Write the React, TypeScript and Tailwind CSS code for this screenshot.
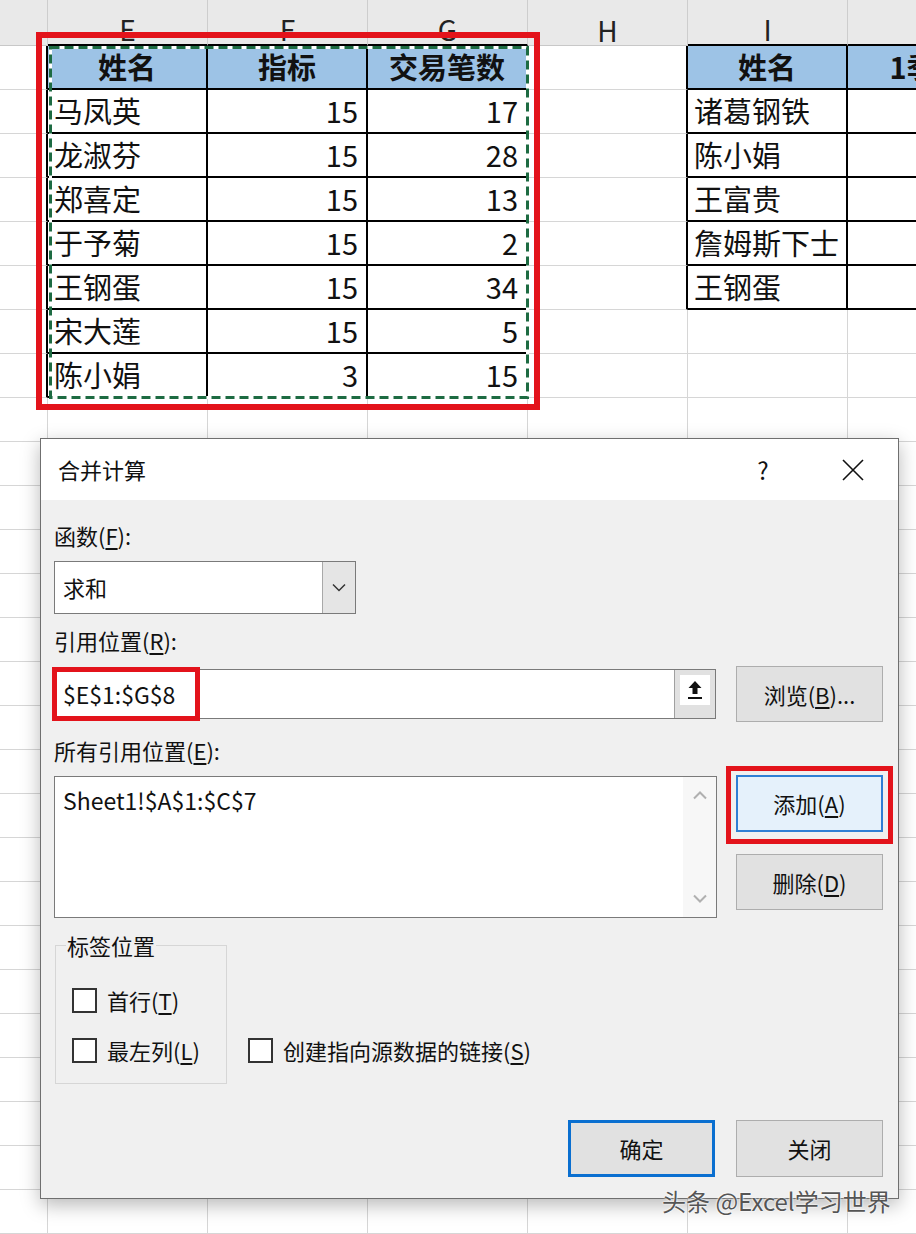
import type { FC, ReactNode } from 'react';

const colWidths = ['w-[48px]', 'w-[160px]', 'w-[160px]', 'w-[160px]', 'w-[160px]', 'w-[160px]', 'w-[160px]'];
const colLetters = ['', 'E', 'F', 'G', 'H', 'I', ''];

const tableA: (string | number)[][] = [
  ['姓名', '指标', '交易笔数'],
  ['马凤英', 15, 17],
  ['龙淑芬', 15, 28],
  ['郑喜定', 15, 13],
  ['于予菊', 15, 2],
  ['王钢蛋', 15, 34],
  ['宋大莲', 15, 5],
  ['陈小娟', 3, 15],
];

const tableB: string[][] = [
  ['姓名', '1季度'],
  ['诸葛钢铁', ''],
  ['陈小娟', ''],
  ['王富贵', ''],
  ['詹姆斯下士', ''],
  ['王钢蛋', ''],
];

const ROWS = 27;

const cellContent = (r: number, c: number): ReactNode => {
  if (r >= 1 && r <= 8 && c >= 1 && c <= 3) {
    const v = tableA[r - 1][c - 1];
    if (r === 1) return <span className="w-full text-center font-bold">{v}</span>;
    if (typeof v === 'number') return <span className="w-full pr-[8px] text-right">{v}</span>;
    return <span className="pl-[6px]">{v}</span>;
  }
  if (r >= 1 && r <= 6 && c >= 5) {
    const v = tableB[r - 1][c - 5];
    if (r === 1) return <span className="w-full text-center font-bold">{v}</span>;
    return <span className="pl-[6px]">{v}</span>;
  }
  return null;
};

const cellClass = (r: number, c: number) => {
  const inA = r <= 8 && c >= 1 && c <= 3;
  const inB = r <= 6 && c >= 5;
  const rightBlack = inA || inB || (c === 0 && r <= 8) || (c === 4 && r <= 6);
  const isHead = (r === 1 && c >= 1 && c <= 3) || (r === 1 && c >= 5);
  return [
    'flex h-[44px] shrink-0 items-center overflow-hidden whitespace-nowrap',
    colWidths[c],
    rightBlack ? 'border-r-2 border-r-black' : 'border-r border-r-[#d6d6d6]',
    inA || inB ? 'border-b-2 border-b-black' : 'border-b border-b-[#d6d6d6]',
    isHead ? 'bg-[#9dc3e6]' : 'bg-white',
  ].join(' ');
};

const Mn: FC<{ children: ReactNode }> = ({ children }) => (
  <span className="underline underline-offset-[3px]">{children}</span>
);

const WinButton: FC<{ children: ReactNode; className?: string }> = ({ children, className }) => (
  <button
    type="button"
    className={`flex h-[56px] w-[147px] items-center justify-center text-[22px] text-[#111] ${className ?? 'border border-[#adadad] bg-[#e1e1e1]'}`}
  >
    {children}
  </button>
);

const CheckBox: FC<{ children: ReactNode }> = ({ children }) => (
  <label className="flex h-[28px] items-center">
    <span className="h-[25px] w-[25px] border-2 border-[#333] bg-white" />
    <span className="ml-[10px] text-[22px] leading-[28px] text-[#111]">{children}</span>
  </label>
);

const Dialog: FC = () => (
  <div className="absolute left-[40px] top-[438px] flex h-[761px] w-[859px] flex-col border border-[#6f6f6f] bg-[#f0f0f0] shadow-[0_6px_18px_rgba(0,0,0,0.28)]">
    <div className="flex h-[61px] items-center bg-white pl-[17px] pr-[21px]">
      <span className="text-[22px] text-[#111]">合并计算</span>
      <div className="ml-auto flex items-center gap-[42px]">
        <span className="w-[48px] text-center text-[24px] text-[#111]">?</span>
        <span className="flex w-[48px] justify-center">
          <svg width="22" height="22" viewBox="0 0 22 22">
            <path d="M1 1 L21 21 M21 1 L1 21" stroke="#111" strokeWidth="1.6" fill="none" />
          </svg>
        </span>
      </div>
    </div>

    <div className="flex flex-1 flex-col pl-[13px] pr-[15px] pt-[21px] text-[22px] text-[#111]">
      <div className="h-[28px] leading-[28px]">
        函数(<Mn>F</Mn>):
      </div>
      <div className="mt-[12px] flex h-[53px] w-[302px] border border-[#7a7a7a] bg-white">
        <span className="flex flex-1 items-center pl-[8px]">求和</span>
        <span className="flex w-[33px] items-center justify-center border-l border-[#a8a8a8] bg-[#e5e5e5]">
          <svg width="14" height="9" viewBox="0 0 14 9">
            <path d="M1 1.5 L7 7.5 L13 1.5" stroke="#333" strokeWidth="1.5" fill="none" />
          </svg>
        </span>
      </div>

      <div className="mt-[12px] h-[28px] leading-[28px]">
        引用位置(<Mn>R</Mn>):
      </div>
      <div className="mt-[12px] flex h-[56px] items-center">
        <div className="relative flex h-[50px] w-[662px] border border-[#7a7a7a] bg-white">
          <span className="flex flex-1 items-center pl-[8px] text-[23px]">$E$1:$G$8</span>
          <span className="flex w-[41px] items-start justify-center border-l border-[#a0a0a0] bg-[#e1e1e1] pt-[5px]">
            <span className="flex h-[30px] w-[30px] items-center justify-center bg-white">
              <svg width="18" height="22" viewBox="0 0 18 22">
                <path d="M9 2 L2.5 9 H6.5 V15 H11.5 V9 H15.5 Z" fill="#111" />
                <rect x="2" y="18" width="14" height="2" fill="#111" />
              </svg>
            </span>
          </span>
          <div className="absolute -left-[3px] -top-[3px] h-[54px] w-[148px] border-[5px] border-[#e3131b]" />
        </div>
        <WinButton className="ml-[20px] border border-[#adadad] bg-[#e1e1e1]">
          浏览(<Mn>B</Mn>)...
        </WinButton>
      </div>

      <div className="mt-[14px] h-[28px] leading-[28px]">
        所有引用位置(<Mn>E</Mn>):
      </div>
      <div className="mt-[11px] flex items-start">
        <div className="mt-[1px] flex h-[142px] w-[663px] border border-[#7a7a7a] bg-white">
          <span className="flex-1 pl-[8px] pt-[8px] text-[23px] leading-[30px]">Sheet1!$A$1:$C$7</span>
          <span className="flex w-[33px] flex-col items-center justify-between bg-[#f7f7f7] py-[14px]">
            <svg width="14" height="9" viewBox="0 0 14 9">
              <path d="M1 7.5 L7 1.5 L13 7.5" stroke="#b0b0b0" strokeWidth="2" fill="none" />
            </svg>
            <svg width="14" height="9" viewBox="0 0 14 9">
              <path d="M1 1.5 L7 7.5 L13 1.5" stroke="#b0b0b0" strokeWidth="2" fill="none" />
            </svg>
          </span>
        </div>
        <div className="ml-[19px] flex flex-col">
          <div className="relative">
            <button
              type="button"
              className="flex h-[57px] w-[147px] items-center justify-center border-2 border-[#2f7fd4] bg-[#e5f1fb] text-[22px] text-[#111]"
            >
              添加(<Mn>A</Mn>)
            </button>
            <div className="absolute -left-[10px] -top-[9px] h-[78px] w-[167px] border-[5px] border-[#e3131b]" />
          </div>
          <WinButton className="mt-[22px] border border-[#adadad] bg-[#e1e1e1]">
            删除(<Mn>D</Mn>)
          </WinButton>
        </div>
      </div>

      <div className="mt-[13px] flex items-end">
        <fieldset className="ml-[1px] h-[153px] w-[172px] border border-[#d6d6d6] px-[16px]">
          <legend className="ml-[-6px] h-[28px] px-[1px] leading-[28px]">标签位置</legend>
          <div className="mt-[27px] flex flex-col gap-[22px]">
            <CheckBox>
              首行(<Mn>T</Mn>)
            </CheckBox>
            <CheckBox>
              最左列(<Mn>L</Mn>)
            </CheckBox>
          </div>
        </fieldset>
        <div className="mb-[20px] ml-[21px]">
          <CheckBox>
            创建指向源数据的链接(<Mn>S</Mn>)
          </CheckBox>
        </div>
      </div>

      <div className="mt-[36px] flex justify-end gap-[21px]">
        <button
          type="button"
          className="flex h-[57px] w-[147px] items-center justify-center border-[3px] border-[#0a6fd0] bg-[#e1e1e1] text-[22px] text-[#111]"
        >
          确定
        </button>
        <button
          type="button"
          className="flex h-[57px] w-[147px] items-center justify-center border border-[#adadad] bg-[#e1e1e1] text-[22px] text-[#111]"
        >
          关闭
        </button>
      </div>
    </div>
  </div>
);

const App: FC = () => {
  return (
    <div className="relative h-[1234px] w-[916px] overflow-hidden bg-white font-['Noto_Sans_CJK_SC',sans-serif] text-black">
      {/* column header */}
      <div className="flex h-[46px] bg-[#e9e9e9]">
        {colLetters.map((l, c) => (
          <div
            key={c}
            className={`flex h-[46px] shrink-0 items-center justify-center pt-[14px] text-[28px] leading-none text-[#222] ${colWidths[c]} border-r border-[#cdcdcd] ${
              (c >= 1 && c <= 3) || c >= 5 ? 'border-b-2 border-b-black' : 'border-b border-b-[#c8c8c8]'
            }`}
          >
            {l}
          </div>
        ))}
      </div>

      {/* grid */}
      <div className="flex flex-col text-[29px] text-[#111]">
        {Array.from({ length: ROWS }, (_, i) => i + 1).map((r) => (
          <div key={r} className="flex">
            {colLetters.map((_, c) => (
              <div key={c} className={cellClass(r, c)}>
                {cellContent(r, c)}
              </div>
            ))}
          </div>
        ))}
      </div>

      {/* copy range marching ants */}
      <svg className="absolute left-[48px] top-[45px]" width="482" height="355" viewBox="0 0 482 355">
        <rect x="2.5" y="2.5" width="477" height="350" fill="none" stroke="#ffffff" strokeWidth="3" />
        <rect x="2.5" y="2.5" width="477" height="350" fill="none" stroke="#1d6b42" strokeWidth="3" strokeDasharray="9 5" />
      </svg>
      {/* highlight */}
      <div className="absolute left-[36px] top-[32px] h-[378px] w-[504px] border-[6px] border-[#e3131b]" />

      <Dialog />

      <div className="absolute left-[662px] top-[1183px] text-[24px] text-[#555] [text-shadow:0_0_2px_#fff,0_0_2px_#fff]">
        头条 @Excel学习世界
      </div>
    </div>
  );
};

export default App;
